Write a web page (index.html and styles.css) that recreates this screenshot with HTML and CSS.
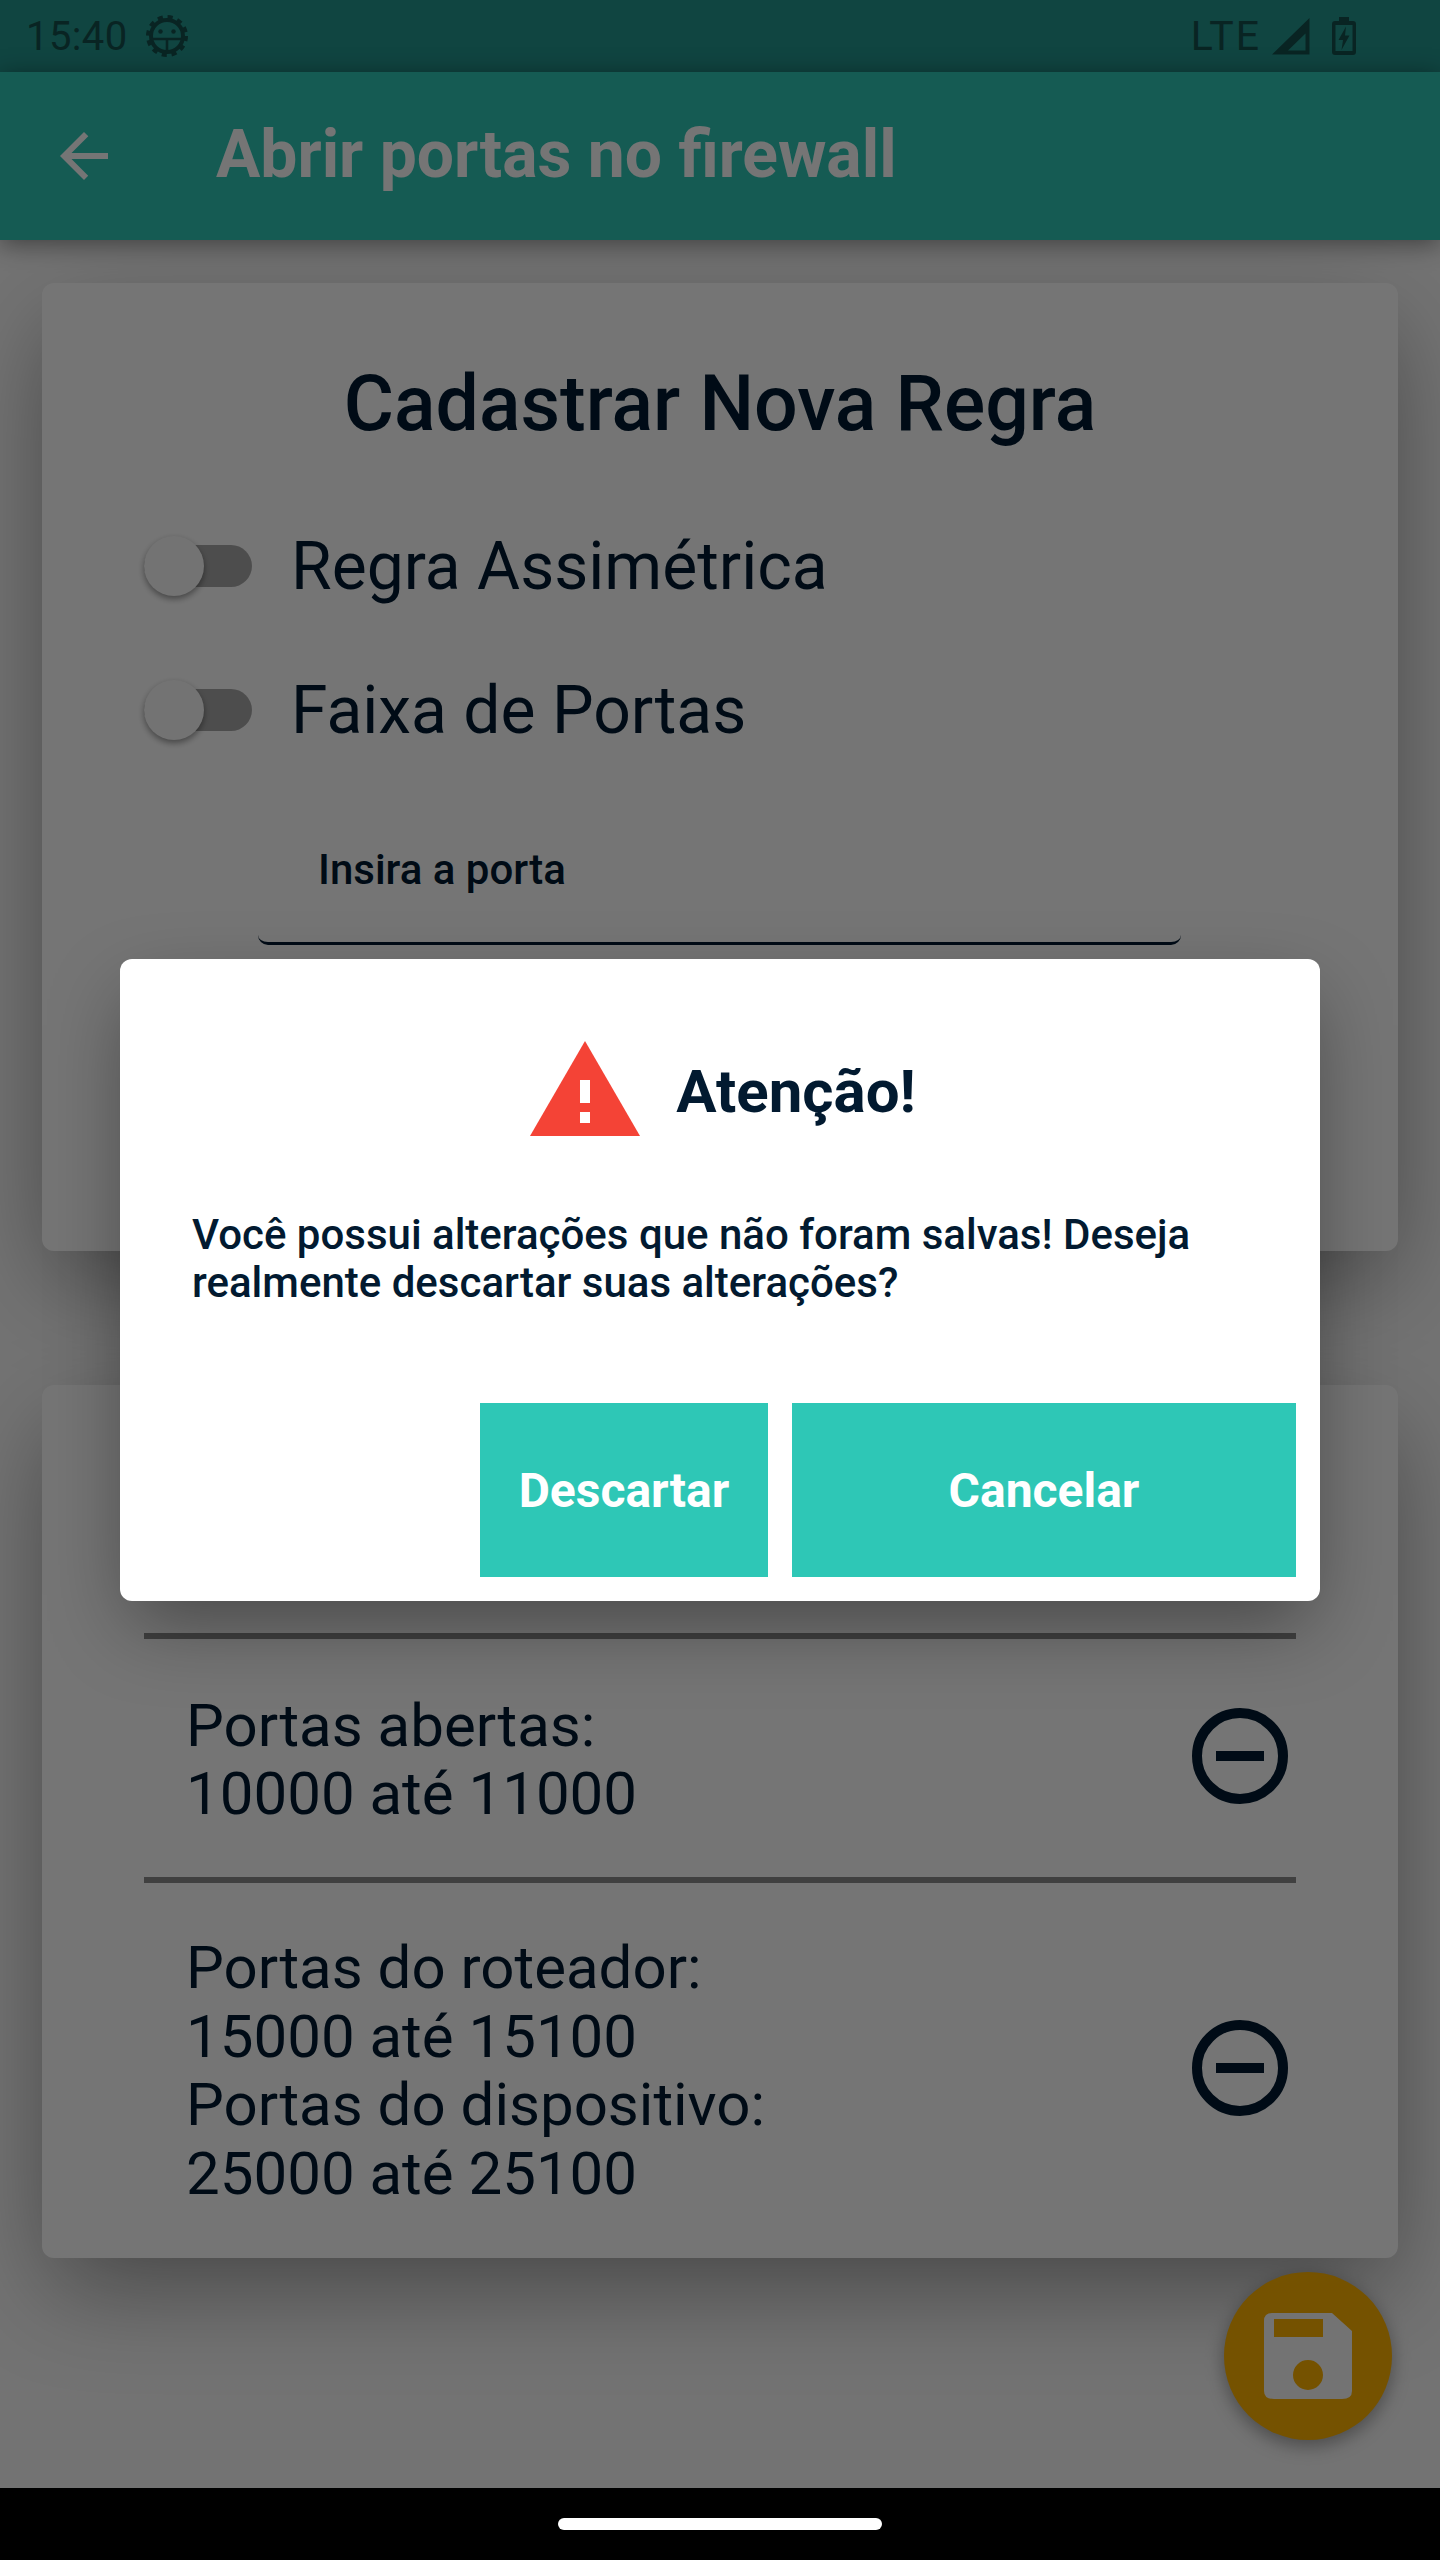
FILE: index.html
```html
<!DOCTYPE html>
<html lang="pt-BR">
<head>
    <meta charset="UTF-8">
    <meta name="viewport" content="width=device-width, initial-scale=1.0">
    <title>Abrir portas no firewall</title>
    <link rel="stylesheet" href="styles.css">
</head>
<body>
    <div class="status-bar">
        <div class="status-left">
            <span class="status-time">15:40</span>
            <svg class="icon-debug" viewBox="0 0 42 42">
                <circle cx="21" cy="21" r="16" fill="none" stroke="currentColor" stroke-width="4"/>
                <circle cx="21" cy="21" r="18.5" fill="none" stroke="currentColor" stroke-width="5" stroke-dasharray="5 4.69"/>
                <path d="M5 24H37M21 24V37" fill="none" stroke="currentColor" stroke-width="2.6"/>
                <circle cx="14.5" cy="16.5" r="2.2" fill="currentColor"/>
                <circle cx="27.5" cy="16.5" r="2.2" fill="currentColor"/>
            </svg>
        </div>
        <div class="status-right">
            <span class="status-lte">LTE</span>
            <svg class="icon-signal" viewBox="0 0 38 37">
                <path d="M0 36.500L37.500 0V36.500ZM16 32.500H33.500V15.500Z" fill="currentColor" fill-rule="evenodd"/>
            </svg>
            <svg class="icon-battery" viewBox="0 0 24 38">
                <path d="M7 0H17V4H21Q24 4 24 7V35Q24 38 21 38H3Q0 38 0 35V7Q0 4 3 4H7ZM3.500 8V34H20.500V8Z" fill="currentColor" fill-rule="evenodd"/>
                <path d="M14 9.500L6.500 23H11L9.500 33L17.500 18.500H13Z" fill="currentColor"/>
            </svg>
        </div>
    </div>

    <header class="app-bar">
        <svg class="icon-back" viewBox="0 0 48 48">
            <path d="M48 21H11.500L28.300 4.200L24 0L0 24L24 48L28.200 43.800L11.500 27H48Z" fill="currentColor"/>
        </svg>
        <h1 class="app-title">Abrir portas no firewall</h1>
    </header>

    <main class="content">
        <section class="card card-form">
            <h2 class="form-title">Cadastrar Nova Regra</h2>
            <div class="switch-row">
                <span class="switch"><span class="switch-thumb"></span></span>
                <span class="switch-label">Regra Assimétrica</span>
            </div>
            <div class="switch-row">
                <span class="switch"><span class="switch-thumb"></span></span>
                <span class="switch-label">Faixa de Portas</span>
            </div>
            <div class="field">Insira a porta</div>
        </section>

        <section class="card card-list">
            <div class="rule rule-single">
                <div class="rule-text">Portas abertas:<br>10000 até 11000</div>
                <svg class="icon-minus" viewBox="0 0 96 96">
                    <circle cx="48" cy="48" r="43" fill="none" stroke="currentColor" stroke-width="10"/>
                    <rect x="24" y="43" width="48" height="10" fill="currentColor"/>
                </svg>
            </div>
            <div class="rule">
                <div class="rule-text">Portas do roteador:<br>15000 até 15100<br>Portas do dispositivo:<br>25000 até 25100</div>
                <svg class="icon-minus" viewBox="0 0 96 96">
                    <circle cx="48" cy="48" r="43" fill="none" stroke="currentColor" stroke-width="10"/>
                    <rect x="24" y="43" width="48" height="10" fill="currentColor"/>
                </svg>
            </div>
        </section>
    </main>

    <div class="nav-bar"><span class="home-pill"></span></div>

    <button class="fab">
        <svg viewBox="0 0 88 86" width="88" height="86">
            <path d="M8 0H68L88 18V78Q88 86 78 86H10Q0 86 0 78V8Q0 0 8 0ZM10 6V24H59V6ZM44 47A15 15 0 1 0 44 77A15 15 0 1 0 44 47Z" fill="currentColor" fill-rule="evenodd"/>
        </svg>
    </button>

    <div class="scrim"></div>

    <div class="dialog">
        <div class="dialog-head">
            <svg class="icon-warning" viewBox="0 0 110 95">
                <path d="M55 0L110 95H0Z" fill="#f44336"/>
                <rect x="50" y="39" width="10" height="23" fill="#fff"/>
                <rect x="50" y="71" width="10" height="11" fill="#fff"/>
            </svg>
            <span class="dialog-title">Atenção!</span>
        </div>
        <p class="dialog-text">Você possui alterações que não foram salvas! Deseja realmente descartar suas alterações?</p>
        <div class="dialog-actions">
            <button class="btn btn-discard">Descartar</button>
            <button class="btn btn-cancel">Cancelar</button>
        </div>
    </div>
</body>
</html>
```

FILE: styles.css
```css
* {
    box-sizing: border-box;
}

body {
    font-family: 'Roboto', sans-serif;
    margin: 0;
    width: 1440px;
    height: 2560px;
    display: flex;
    flex-direction: column;
    background: #fafafa;
    color: #021a30;
    overflow: hidden;
}

.status-bar {
    height: 72px;
    background: #23968e;
    color: #14504c;
    display: flex;
    justify-content: space-between;
    align-items: center;
    padding: 0 84px 0 26px;
}

.status-left,
.status-right {
    display: flex;
    align-items: center;
}

.status-time {
    font-size: 40px;
    letter-spacing: 0.4px;
}

.icon-debug {
    width: 42px;
    height: 42px;
    margin-left: 18px;
}

.status-lte {
    font-size: 41px;
    letter-spacing: 2px;
}

.icon-signal {
    width: 38px;
    height: 37px;
    margin-left: 11px;
}

.icon-battery {
    width: 24px;
    height: 38px;
    margin-left: 22px;
}

.app-bar {
    height: 168px;
    background: #2ec7b6;
    color: #fff;
    display: flex;
    align-items: center;
    padding-left: 60px;
    box-shadow: 0 4px 24px rgba(0, 0, 0, 0.45);
    position: relative;
}

.icon-back {
    width: 48px;
    height: 48px;
}

.app-title {
    font-size: 66px;
    font-weight: 700;
    margin: 0 0 4px 108px;
}

.content {
    flex: 1;
    padding: 43px 42px 0;
}

.card {
    background: #fff;
    border-radius: 12px;
    box-shadow: 0 36px 100px -10px rgba(0, 0, 0, 0.4);
}

.card-form {
    height: 968px;
    padding-top: 74px;
}

.form-title {
    font-size: 77px;
    font-weight: 500;
    line-height: 94px;
    margin: 0 0 43px;
    text-align: center;
}

.switch-row {
    display: flex;
    align-items: center;
    height: 144px;
    padding-left: 102px;
}

.switch {
    width: 108px;
    height: 42px;
    border-radius: 21px;
    background: #a9a9a9;
    display: block;
    position: relative;
    flex: none;
}

.switch-thumb {
    position: absolute;
    left: 0;
    top: -9px;
    width: 60px;
    height: 60px;
    border-radius: 50%;
    background: #fafafa;
    box-shadow: 0 3px 6px rgba(0, 0, 0, 0.4);
}

.switch-label {
    font-size: 66px;
    margin-left: 39px;
}

.field {
    margin: 23px 217px 0 216px;
    height: 140px;
    padding: 40px 0 0 60px;
    font-size: 42px;
    font-weight: 500;
    border-bottom: 3px solid #021a30;
    border-radius: 0 0 10px 10px;
}

.card-list {
    height: 873px;
    margin-top: 134px;
    padding: 248px 102px 0;
}

.rule {
    display: flex;
    justify-content: space-between;
    align-items: center;
    border-top: 6px solid #8c8c8c;
    padding: 51px 8px 40px 42px;
}

.rule-single {
    height: 244px;
    padding-top: 44px;
}

.rule-single .icon-minus {
    margin-top: -8px;
}

.rule-text {
    font-size: 60px;
    line-height: 68.500px;
}

.icon-minus {
    width: 96px;
    height: 96px;
    flex: none;
    margin-top: -6px;
}

.nav-bar {
    height: 72px;
    background: #000;
    display: flex;
    justify-content: center;
    align-items: center;
    position: relative;
    z-index: 3;
}

.home-pill {
    width: 324px;
    height: 12px;
    border-radius: 6px;
    background: #fff;
}

.fab {
    position: absolute;
    left: 1224px;
    top: 2272px;
    width: 168px;
    height: 168px;
    border: 0;
    border-radius: 50%;
    background: #ffb300;
    color: #fafafa;
    display: flex;
    align-items: center;
    justify-content: center;
    padding: 0;
    box-shadow: 0 6px 18px rgba(0, 0, 0, 0.35);
}

.scrim {
    position: absolute;
    left: 0;
    top: 0;
    width: 1440px;
    height: 2488px;
    background: rgba(0, 0, 0, 0.54);
}

.dialog {
    position: absolute;
    left: 120px;
    top: 959px;
    width: 1200px;
    height: 642px;
    background: #fff;
    border-radius: 12px;
    padding: 82px 24px 24px;
    box-shadow: 0 30px 80px -10px rgba(0, 0, 0, 0.4);
    display: flex;
    flex-direction: column;
}

.dialog-head {
    display: flex;
    justify-content: center;
    align-items: center;
    padding-left: 6px;
}

.icon-warning {
    width: 110px;
    height: 95px;
}

.dialog-title {
    font-size: 60px;
    font-weight: 700;
    margin: 5px 0 0 36px;
}

.dialog-text {
    font-size: 42px;
    font-weight: 500;
    line-height: 48px;
    margin: 75px 48px 0;
}

.dialog-actions {
    margin-top: auto;
    display: flex;
    justify-content: flex-end;
    gap: 24px;
}

.btn {
    height: 174px;
    border: 0;
    background: #2ec7b6;
    color: #fff;
    font-family: inherit;
    font-size: 48px;
    font-weight: 700;
    padding: 0;
}

.btn-discard {
    width: 288px;
}

.btn-cancel {
    width: 504px;
}
```
